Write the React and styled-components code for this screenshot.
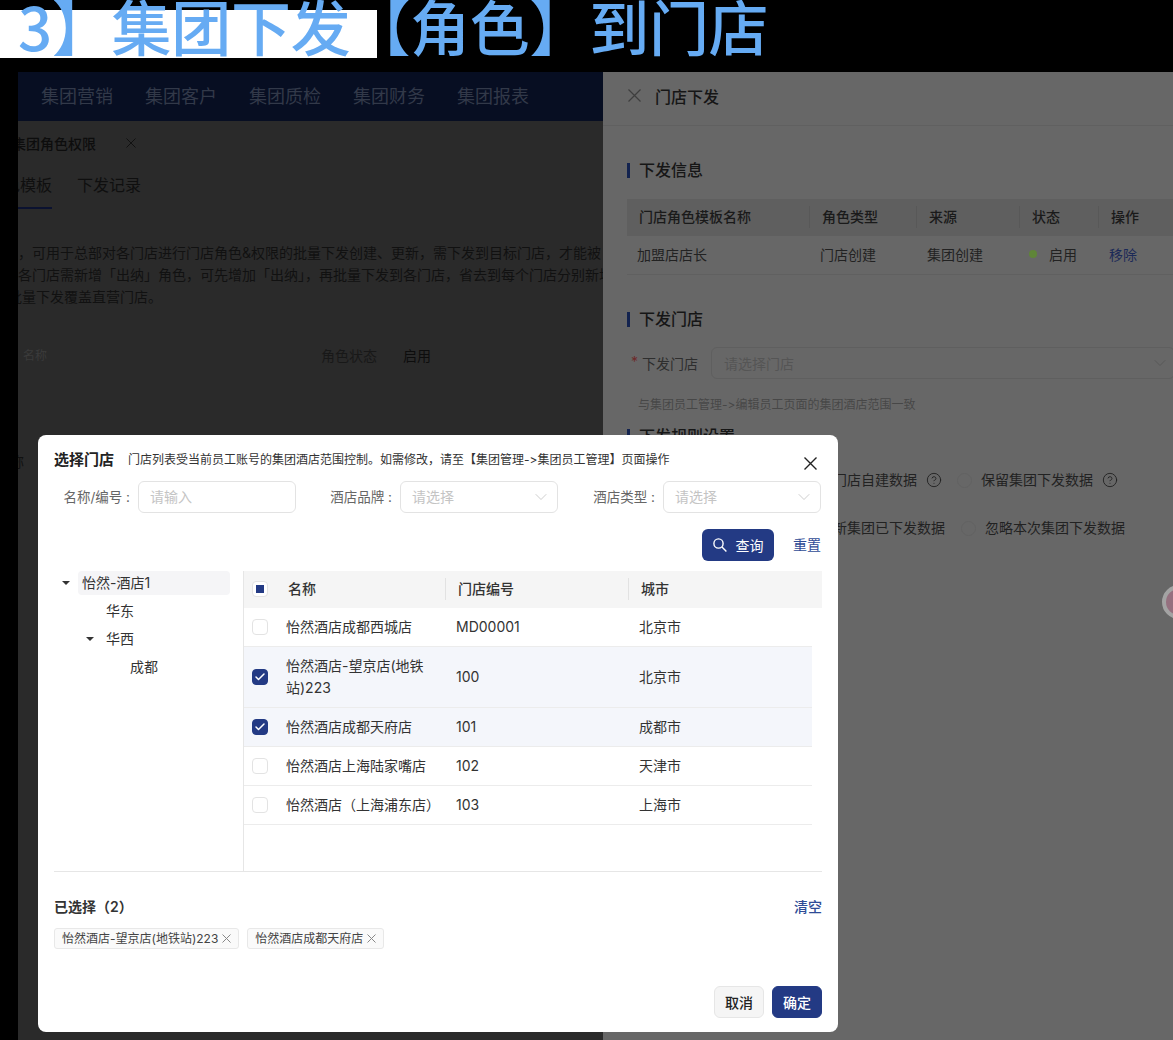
import React from "react";
import styled, { createGlobalStyle } from "styled-components";
import { ChevronDown, CircleHelp, Check } from "lucide-react";

const CJK = `"Inter", "Noto Sans CJK SC", sans-serif`;

const GlobalStyle = createGlobalStyle`
  html, body {
    margin: 0;
    padding: 0;
    background: #000;
  }
  * {
    box-sizing: border-box;
  }
`;

const Page = styled.div`
  position: relative;
  width: 1173px;
  height: 1040px;
  overflow: hidden;
  background: #000;
  font-family: ${CJK};
  font-size: 14px;
  font-feature-settings: "calt" 0;
  font-variant-ligatures: none;
`;

const Banner = styled.div`
  position: relative;
  height: 72px;
  padding-left: 18px;
  background: #000;
`;

const BannerStrip = styled.div`
  position: absolute;
  left: 0;
  top: 10px;
  width: 377px;
  height: 48px;
  background: #fff;
`;

const BannerTitle = styled.h1`
  position: relative;
  margin: 0;
  font-family: "Noto Sans CJK SC", sans-serif;
  font-size: 60px;
  line-height: 50px;
  font-weight: 500;
  letter-spacing: -0.3px;
  color: #66abf3;
  white-space: nowrap;
`;

const Body = styled.div`
  display: flex;
  height: 968px;
  padding-left: 18px;
`;

const LeftPage = styled.div`
  width: 585px;
  overflow: hidden;
  background: #2a2a2a;
`;

const TopNav = styled.div`
  display: flex;
  gap: 32px;
  align-items: center;
  height: 49px;
  padding: 0 0 4px 23px;
  background: #070e22;
  color: #323949;
  font-size: 18px;
`;

const TabBar = styled.div`
  display: flex;
  align-items: center;
  height: 45px;
  margin-left: -6px;
  padding-bottom: 2px;
  color: #0d0d0d;
  font-size: 14px;
  font-weight: 500;
`;

const TabClose = styled.span`
  display: flex;
  margin-left: 30px;
  color: #111;
`;

const SubTabs = styled.div`
  display: flex;
  gap: 25px;
  height: 44px;
  margin-left: -30px;
  padding-top: 6px;
  color: #0f0f0f;
  font-size: 16px;
`;

const SubTab = styled.span`
  height: 37px;
  border-bottom: ${(p) => (p.$active ? "2px solid #0b1230" : "none")};
`;

const Intro = styled.div`
  margin-top: 32px;
  color: #111;
  font-size: 14px;
  line-height: 22px;
  white-space: nowrap;
`;

const IntroLine = styled.div`
  margin-left: ${(p) => p.$shift || 0}px;
`;

const FilterRow = styled.div`
  display: grid;
  grid-template-columns: 303px 82px auto;
  height: 22px;
  margin-top: 37px;
  line-height: 22px;
`;

const DimLabel = styled.span`
  padding-left: 5px;
  color: #3b3b3b;
  font-size: 12px;
`;

const FilterLabel = styled.span`
  color: #181818;
`;

const FilterValue = styled.span`
  color: #0d0d0d;
`;

const CutLabel = styled.div`
  height: 22px;
  margin: 84px 0 0 -22px;
  color: #111;
  line-height: 22px;
`;

const Drawer = styled.div`
  flex: 1;
  overflow: hidden;
  background: #676767;
`;

const DrawerHead = styled.div`
  display: flex;
  align-items: center;
  gap: 14px;
  height: 54px;
  padding: 0 0 6px 25px;
  border-bottom: 1px solid #606060;
  color: #161616;
  font-size: 16px;
  font-weight: 500;
`;

const DrawerClose = styled.span`
  display: flex;
  color: #3e3e3e;
`;

const DrawerBody = styled.div`
  padding-left: 24px;
`;

const SectionTitle = styled.div`
  display: flex;
  align-items: center;
  gap: 9px;
  height: 22px;
  margin-top: ${(p) => p.$top}px;
  color: #161616;
  font-size: 16px;
  font-weight: 500;
  line-height: 22px;

  &::before {
    content: "";
    width: 3px;
    height: 15px;
    background: #13234f;
  }
`;

const RoleTable = styled.div`
  width: 546px;
  margin-top: 18px;
`;

const RoleHead = styled.div`
  display: grid;
  grid-template-columns: 182px 107px 103px 79px 75px;
  height: 37px;
  align-items: center;
  padding-bottom: 2px;
  background: #5f5f5f;
  color: #1a1a1a;
  font-size: 14px;
  font-weight: 500;
`;

const RoleHeadCell = styled.span`
  height: 22px;
  padding-left: 12px;
  line-height: 22px;
  border-left: ${(p) => (p.$first ? "none" : "1px solid #585858")};
`;

const RoleRow = styled.div`
  display: grid;
  grid-template-columns: 183px 107px 103px 79px 74px;
  height: 39px;
  align-items: center;
  padding-bottom: 2px;
  border-bottom: 1px solid #606060;
  color: #222;
  font-size: 14px;
`;

const RoleCell = styled.span`
  display: flex;
  align-items: center;
  padding-left: 10px;
  color: ${(p) => p.$color || "inherit"};
`;

const StatusDot = styled.i`
  width: 8px;
  height: 8px;
  margin: 0 12px 0 -1px;
  border-radius: 50%;
  background: #5f8538;
`;

const StoreField = styled.div`
  display: grid;
  grid-template-columns: 84px 464px;
  align-items: center;
  height: 32px;
  margin-top: 17px;
  color: #2e2e2e;
  font-size: 14px;
`;

const FieldLabel = styled.span`
  display: flex;
  gap: 4px;
  padding-left: 4px;
  white-space: nowrap;
`;

const Required = styled.span`
  color: #6e2a2a;
`;

const FakeSelect = styled.div`
  display: flex;
  align-items: center;
  justify-content: space-between;
  height: 32px;
  padding: 0 4px 0 12px;
  border: 1px solid #5f5f5f;
  border-radius: 6px;
  color: #555;
`;

const Hint = styled.div`
  margin-top: 16px;
  padding-left: 11px;
  color: #474747;
  font-size: 12px;
  line-height: 20px;
`;

const OptionRow = styled.div`
  display: flex;
  align-items: center;
  gap: ${(p) => p.$gap}px;
  height: 22px;
  margin-top: ${(p) => p.$top}px;
  padding-left: ${(p) => p.$left}px;
  color: #222;
  font-size: 14px;
  line-height: 22px;
  white-space: nowrap;
`;

const OptionItem = styled.span`
  display: flex;
  align-items: center;
  gap: 9px;
`;

const RadioCircle = styled.i`
  width: 15px;
  height: 15px;
  border: 1px solid #626262;
  border-radius: 50%;
`;

const EdgeBadge = styled.div`
  position: absolute;
  left: 1162px;
  top: 585px;
  width: 34px;
  height: 34px;
  border: 4px solid #a3a3a3;
  border-radius: 50%;
  background: #95707f;
`;

const Modal = styled.div`
  position: absolute;
  left: 38px;
  top: 435px;
  display: flex;
  flex-direction: column;
  width: 800px;
  height: 597px;
  padding: 14px 16px 0;
  border-radius: 8px;
  background: #fff;
  color: #333;
  line-height: 22px;
`;

const ModalHead = styled.div`
  display: flex;
  align-items: center;
  height: 22px;
`;

const ModalTitle = styled.span`
  margin-right: 14px;
  color: #222;
  font-size: 15px;
  font-weight: 600;
`;

const ModalNote = styled.span`
  flex: 1;
  color: #333;
  font-size: 12px;
`;

const ModalClose = styled.span`
  display: flex;
  margin: 6px 5px 0 0;
  color: #222;
`;

const FormRow = styled.div`
  display: grid;
  grid-template-columns: 242px 262px 1fr;
  margin-top: 10px;
  padding-right: 1px;
`;

const FormItem = styled.div`
  display: flex;
  align-items: center;
  justify-content: flex-end;
  gap: 8px;
  color: #666;
  font-size: 13.5px;
  white-space: nowrap;
`;

const FormControl = styled.div`
  display: flex;
  align-items: center;
  justify-content: space-between;
  width: 158px;
  height: 32px;
  padding: 0 6px 0 11px;
  border: 1px solid #e3e3e3;
  border-radius: 6px;
  color: #c4c4c4;
  font-size: 14px;
`;

const ActionRow = styled.div`
  display: flex;
  align-items: center;
  justify-content: flex-end;
  gap: 19px;
  margin-top: 16px;
  padding-right: 1px;
`;

const QueryButton = styled.button`
  display: flex;
  align-items: center;
  justify-content: center;
  gap: 9px;
  width: 72px;
  height: 32px;
  padding: 0;
  border: none;
  border-radius: 6px;
  background: #233a84;
  color: #fff;
  font-family: ${CJK};
  font-size: 14px;
`;

const TextLink = styled.a`
  color: #2f4c96;
  font-size: 14px;
  font-weight: ${(p) => p.$weight || 400};
`;

const Split = styled.div`
  display: flex;
  height: 301px;
  margin-top: 10px;
  border-bottom: 1px solid #e6e6e6;
`;

const TreePane = styled.div`
  display: flex;
  flex-direction: column;
  gap: 4px;
  flex-shrink: 0;
  width: 190px;
  padding: 0 13px 0 8px;
  border-right: 1px solid #e6e6e6;
`;

const TreeRow = styled.div`
  display: flex;
  align-items: center;
  height: 24px;
  padding-left: ${(p) => p.$indent}px;
  color: #333;
  font-size: 14px;
`;

const TreeArrow = styled.i`
  width: 0;
  height: 0;
  margin-right: 12px;
  border-left: 4px solid transparent;
  border-right: 4px solid transparent;
  border-top: 4px solid #333;
  visibility: ${(p) => (p.$hidden ? "hidden" : "visible")};
`;

const TreeLabel = styled.span`
  display: block;
  width: ${(p) => (p.$selected ? "152px" : "auto")};
  height: 24px;
  margin-left: -4px;
  padding-left: 4px;
  border-radius: 4px;
  background: ${(p) => (p.$selected ? "#f5f5f7" : "transparent")};
  line-height: 24px;
`;

const TablePane = styled.div`
  flex: 1;
`;

const TableHead = styled.div`
  display: grid;
  grid-template-columns: 201px 183px 1fr;
  align-items: center;
  height: 37px;
  padding-bottom: 1px;
  background: #f5f5f5;
  color: #333;
  font-size: 14px;
  font-weight: 500;
`;

const HeadCell = styled.span`
  display: flex;
  align-items: center;
  height: 22px;
  padding-left: ${(p) => p.$pad || 0}px;
  border-left: ${(p) => (p.$divider ? "1px solid #e2e2e2" : "none")};
`;

const HeadName = styled.span`
  margin-left: 2px;
`;

const TableRow = styled.div`
  display: grid;
  grid-template-columns: 201px 183px 1fr;
  align-items: center;
  width: 568px;
  height: ${(p) => p.$height}px;
  border-bottom: 1px solid #ececec;
  background: ${(p) => (p.$checked ? "#f4f6fb" : "#fff")};
  color: #333;
  font-size: 14px;
  line-height: 22px;
`;

const NameCell = styled.div`
  display: flex;
  align-items: center;
`;

const CheckBox = styled.span`
  display: flex;
  flex-shrink: 0;
  align-items: center;
  justify-content: center;
  width: 16px;
  height: 16px;
  margin: 0 18px 0 8px;
  border: 1px solid ${(p) => (p.$checked ? "#233a84" : "#e3e3e3")};
  border-radius: 4px;
  background: ${(p) => (p.$checked ? "#233a84" : "#fff")};
  color: #fff;
`;

const HalfMark = styled.i`
  width: 8px;
  height: 8px;
  background: #233a84;
`;

const DataCell = styled.span`
  padding-left: 11px;
`;

const SelectedHead = styled.div`
  display: flex;
  align-items: center;
  justify-content: space-between;
  height: 22px;
  margin-top: 24px;
`;

const SelectedTitle = styled.span`
  color: #333;
  font-size: 14px;
  font-weight: 600;
`;

const ChipRow = styled.div`
  display: flex;
  gap: 8px;
  margin-top: 10px;
`;

const Chip = styled.span`
  display: flex;
  align-items: center;
  gap: 4px;
  height: 21px;
  padding: 0 7px;
  border: 1px solid #e8e8e8;
  border-radius: 3px;
  background: #fafafa;
  color: #444;
  font-size: 12px;
`;

const ChipClose = styled.span`
  display: flex;
  color: #888;
`;

const Footer = styled.div`
  display: flex;
  justify-content: flex-end;
  gap: 8px;
  margin-top: 37px;
`;

const FooterButton = styled.button`
  width: 50px;
  height: 32px;
  padding: 0;
  border: 1px solid ${(p) => (p.$primary ? "#233a84" : "#e6e6e6")};
  border-radius: 6px;
  background: ${(p) => (p.$primary ? "#233a84" : "#f5f5f5")};
  color: ${(p) => (p.$primary ? "#fff" : "#222")};
  font-family: ${CJK};
  font-size: 14px;
  font-weight: 500;
`;

function CloseIcon({ size, weight = 1.2 }) {
  return (
    <svg width={size} height={size} viewBox={`0 0 ${size} ${size}`} fill="none">
      <path
        d={`M0.5 0.5L${size - 0.5} ${size - 0.5}M${size - 0.5} 0.5L0.5 ${size - 0.5}`}
        stroke="currentColor"
        strokeWidth={weight}
      />
    </svg>
  );
}

function SearchIcon() {
  return (
    <svg width="14" height="14" viewBox="0 0 14 14" fill="none" stroke="currentColor" strokeWidth="1.4">
      <circle cx="5.5" cy="5.5" r="4.6" />
      <path d="M9 9L13.4 13.4" />
    </svg>
  );
}

const navItems = ["集团营销", "集团客户", "集团质检", "集团财务", "集团报表"];

const stores = [
  { name: "怡然酒店成都西城店", code: "MD00001", city: "北京市", height: 39 },
  { name: "怡然酒店-望京店(地铁站)223", code: "100", city: "北京市", height: 61, checked: true },
  { name: "怡然酒店成都天府店", code: "101", city: "成都市", height: 39, checked: true },
  { name: "怡然酒店上海陆家嘴店", code: "102", city: "天津市", height: 39 },
  { name: "怡然酒店（上海浦东店）", code: "103", city: "上海市", height: 39 },
];

function App() {
  return (
    <Page>
      <GlobalStyle />
      <Banner>
        <BannerStrip />
        <BannerTitle>3】集团下发【角色】到门店</BannerTitle>
      </Banner>
      <Body>
        <LeftPage>
          <TopNav>
            {navItems.map((item) => (
              <span key={item}>{item}</span>
            ))}
          </TopNav>
          <TabBar>
            集团角色权限
            <TabClose>
              <CloseIcon size={10} weight={1} />
            </TabClose>
          </TabBar>
          <SubTabs>
            <SubTab $active>角色模板</SubTab>
            <SubTab>下发记录</SubTab>
          </SubTabs>
          <Intro>
            <IntroLine>，可用于总部对各门店进行门店角色&权限的批量下发创建、更新，需下发到目标门店，才能被</IntroLine>
            <IntroLine>各门店需新增「出纳」角色，可先增加「出纳」，再批量下发到各门店，省去到每个门店分别新增</IntroLine>
            <IntroLine $shift={-10}>批量下发覆盖直营门店。</IntroLine>
          </Intro>
          <FilterRow>
            <DimLabel>名称</DimLabel>
            <FilterLabel>角色状态</FilterLabel>
            <FilterValue>启用</FilterValue>
          </FilterRow>
          <CutLabel>名称</CutLabel>
        </LeftPage>
        <Drawer>
          <DrawerHead>
            <DrawerClose>
              <CloseIcon size={13} />
            </DrawerClose>
            门店下发
          </DrawerHead>
          <DrawerBody>
            <SectionTitle $top={33}>下发信息</SectionTitle>
            <RoleTable>
              <RoleHead>
                <RoleHeadCell $first>门店角色模板名称</RoleHeadCell>
                <RoleHeadCell>角色类型</RoleHeadCell>
                <RoleHeadCell>来源</RoleHeadCell>
                <RoleHeadCell>状态</RoleHeadCell>
                <RoleHeadCell>操作</RoleHeadCell>
              </RoleHead>
              <RoleRow>
                <RoleCell>加盟店店长</RoleCell>
                <RoleCell>门店创建</RoleCell>
                <RoleCell>集团创建</RoleCell>
                <RoleCell>
                  <StatusDot />
                  启用
                </RoleCell>
                <RoleCell $color="#1c2a58">移除</RoleCell>
              </RoleRow>
            </RoleTable>
            <SectionTitle $top={33}>下发门店</SectionTitle>
            <StoreField>
              <FieldLabel>
                <Required>*</Required>
                下发门店
              </FieldLabel>
              <FakeSelect>
                请选择门店
                <ChevronDown size={20} strokeWidth={1} />
              </FakeSelect>
            </StoreField>
            <Hint>与集团员工管理-&gt;编辑员工页面的集团酒店范围一致</Hint>
            <SectionTitle $top={10}>下发规则设置</SectionTitle>
            <OptionRow $top={22} $left={206} $gap={15}>
              <OptionItem>
                门店自建数据
                <CircleHelp size={16} strokeWidth={1.4} />
              </OptionItem>
              <OptionItem>
                <RadioCircle />
                保留集团下发数据
                <CircleHelp size={16} strokeWidth={1.4} />
              </OptionItem>
            </OptionRow>
            <OptionRow $top={26} $left={192} $gap={16}>
              <OptionItem>更新集团已下发数据</OptionItem>
              <OptionItem>
                <RadioCircle />
                忽略本次集团下发数据
              </OptionItem>
            </OptionRow>
          </DrawerBody>
        </Drawer>
      </Body>
      <EdgeBadge />
      <Modal>
        <ModalHead>
          <ModalTitle>选择门店</ModalTitle>
          <ModalNote>门店列表受当前员工账号的集团酒店范围控制。如需修改，请至【集团管理-&gt;集团员工管理】页面操作</ModalNote>
          <ModalClose>
            <CloseIcon size={13} weight={1.4} />
          </ModalClose>
        </ModalHead>
        <FormRow>
          <FormItem>
            名称/编号 :
            <FormControl>请输入</FormControl>
          </FormItem>
          <FormItem>
            酒店品牌 :
            <FormControl>
              请选择
              <ChevronDown size={20} strokeWidth={1} />
            </FormControl>
          </FormItem>
          <FormItem>
            酒店类型 :
            <FormControl>
              请选择
              <ChevronDown size={20} strokeWidth={1} />
            </FormControl>
          </FormItem>
        </FormRow>
        <ActionRow>
          <QueryButton>
            <SearchIcon />
            查询
          </QueryButton>
          <TextLink>重置</TextLink>
        </ActionRow>
        <Split>
          <TreePane>
            <TreeRow $indent={0}>
              <TreeArrow />
              <TreeLabel $selected>怡然-酒店1</TreeLabel>
            </TreeRow>
            <TreeRow $indent={24}>
              <TreeArrow $hidden />
              <TreeLabel>华东</TreeLabel>
            </TreeRow>
            <TreeRow $indent={24}>
              <TreeArrow />
              <TreeLabel>华西</TreeLabel>
            </TreeRow>
            <TreeRow $indent={48}>
              <TreeArrow $hidden />
              <TreeLabel>成都</TreeLabel>
            </TreeRow>
          </TreePane>
          <TablePane>
            <TableHead>
              <HeadCell>
                <CheckBox>
                  <HalfMark />
                </CheckBox>
                <HeadName>名称</HeadName>
              </HeadCell>
              <HeadCell $divider $pad={12}>门店编号</HeadCell>
              <HeadCell $divider $pad={12}>城市</HeadCell>
            </TableHead>
            {stores.map((s) => (
              <TableRow key={s.code} $height={s.height} $checked={s.checked}>
                <NameCell>
                  <CheckBox $checked={s.checked}>
                    {s.checked && <Check size={12} strokeWidth={3} />}
                  </CheckBox>
                  <span>{s.name}</span>
                </NameCell>
                <DataCell>{s.code}</DataCell>
                <DataCell>{s.city}</DataCell>
              </TableRow>
            ))}
          </TablePane>
        </Split>
        <SelectedHead>
          <SelectedTitle>已选择（2）</SelectedTitle>
          <TextLink $weight={500}>清空</TextLink>
        </SelectedHead>
        <ChipRow>
          <Chip>
            怡然酒店-望京店(地铁站)223
            <ChipClose>
              <CloseIcon size={9} weight={1} />
            </ChipClose>
          </Chip>
          <Chip>
            怡然酒店成都天府店
            <ChipClose>
              <CloseIcon size={9} weight={1} />
            </ChipClose>
          </Chip>
        </ChipRow>
        <Footer>
          <FooterButton>取消</FooterButton>
          <FooterButton $primary>确定</FooterButton>
        </Footer>
      </Modal>
    </Page>
  );
}

export default App;
